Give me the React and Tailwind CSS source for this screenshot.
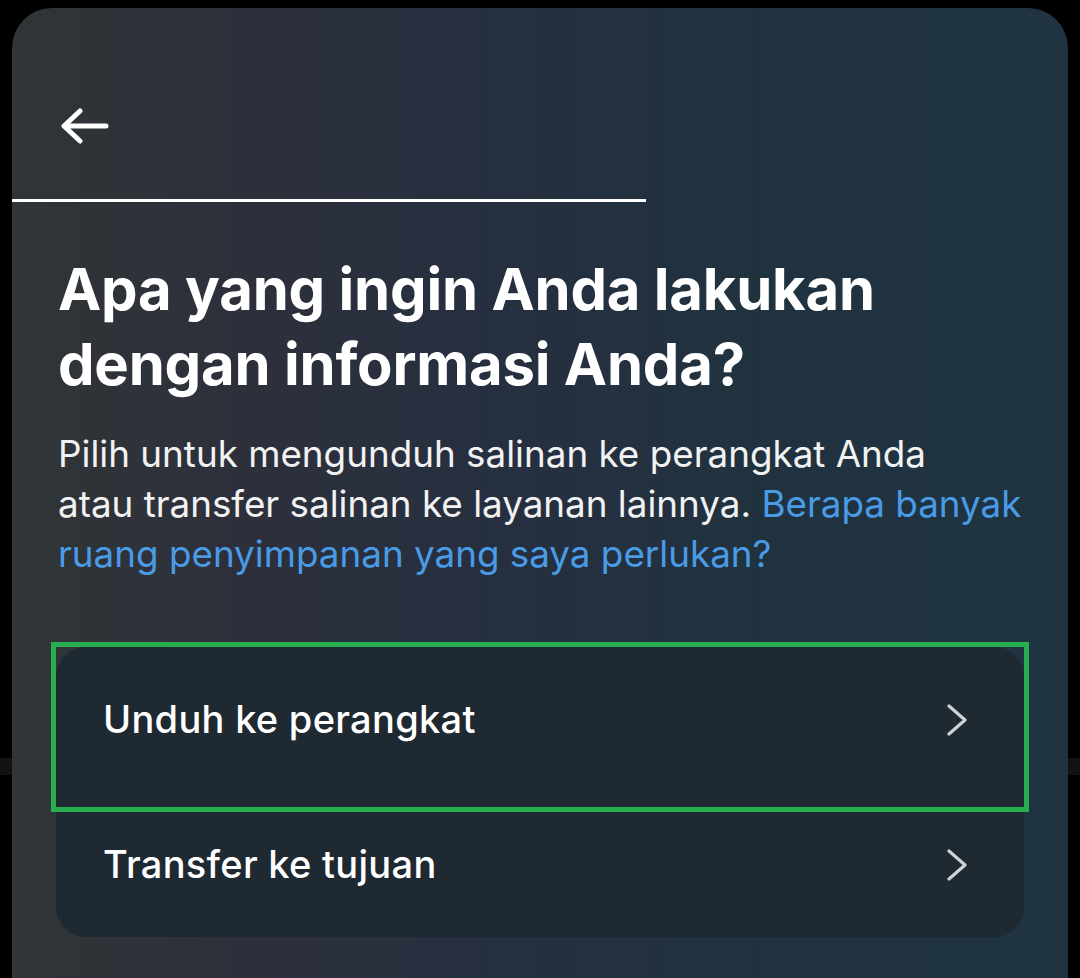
import React from 'react';

const options = [
  { id: 'download', label: 'Unduh ke perangkat' },
  { id: 'transfer', label: 'Transfer ke tujuan' }
];

const BackArrow = () => (
  <svg width="50" height="36" viewBox="0 0 50 36" fill="none">
    <path d="M4 18H46M20 3L4 18L20 33" stroke="#fff" strokeWidth="5" strokeLinecap="round" strokeLinejoin="round" />
  </svg>
);

const Chevron = () => (
  <svg width="24" height="32" viewBox="0 0 24 32" fill="none">
    <path d="M4 2L20 16L4 30" stroke="#cdd2d7" strokeWidth="3.2" strokeLinecap="round" strokeLinejoin="round" />
  </svg>
);

const App = () => {
  return (
    <div
      className="h-[978px] w-[1080px] overflow-hidden bg-[linear-gradient(to_bottom,#000_758px,#121212_758px,#121212_775px,#000_775px)] pt-2 px-3"
      style={{ fontFamily: 'Inter, "Noto Sans", sans-serif' }}
    >
      <div className="h-[970px] rounded-t-[40px] bg-[linear-gradient(to_right,#303537_0%,#2d303b_22%,#262f3f_45%,#21323f_70%,#1f3341_100%)]">
        <div className="pt-[100px] pl-[48px]">
          <BackArrow />
        </div>
        <div className="mt-[55px] h-[3px] w-[634px] bg-white" />

        <div className="pl-[46px] pr-[20px]">
          <h1 className="mt-[50px] text-[58px] font-bold leading-[75px] tracking-[-0.2px] text-white">
            Apa yang ingin Anda lakukan
            <br />
            dengan informasi Anda?
          </h1>
          <p className="mt-[27px] text-[36.8px] leading-[50px] text-[#f2f2f2]">
            Pilih untuk mengunduh salinan ke perangkat Anda
            <br />
            atau transfer salinan ke layanan lainnya.{' '}
            <span className="text-[#4a9be6]">
              Berapa banyak
              <br />
              ruang penyimpanan yang saya perlukan?
            </span>
          </p>
        </div>

        <div className="relative mx-[44px] mt-[68px] rounded-[30px] bg-[#1e2932]">
          <div className="pointer-events-none absolute -left-[5px] -top-[5px] h-[170px] w-[978px] border-[5px] border-[#27ae4f]" />
          {options.map((opt) => (
            <div key={opt.id} className="flex h-[145px] items-center justify-between pl-[47px] pr-[55px]">
              <span className="text-[38px] font-medium tracking-[0.3px] text-white">{opt.label}</span>
              <Chevron />
            </div>
          ))}
        </div>
      </div>
    </div>
  );
};

export default App;
